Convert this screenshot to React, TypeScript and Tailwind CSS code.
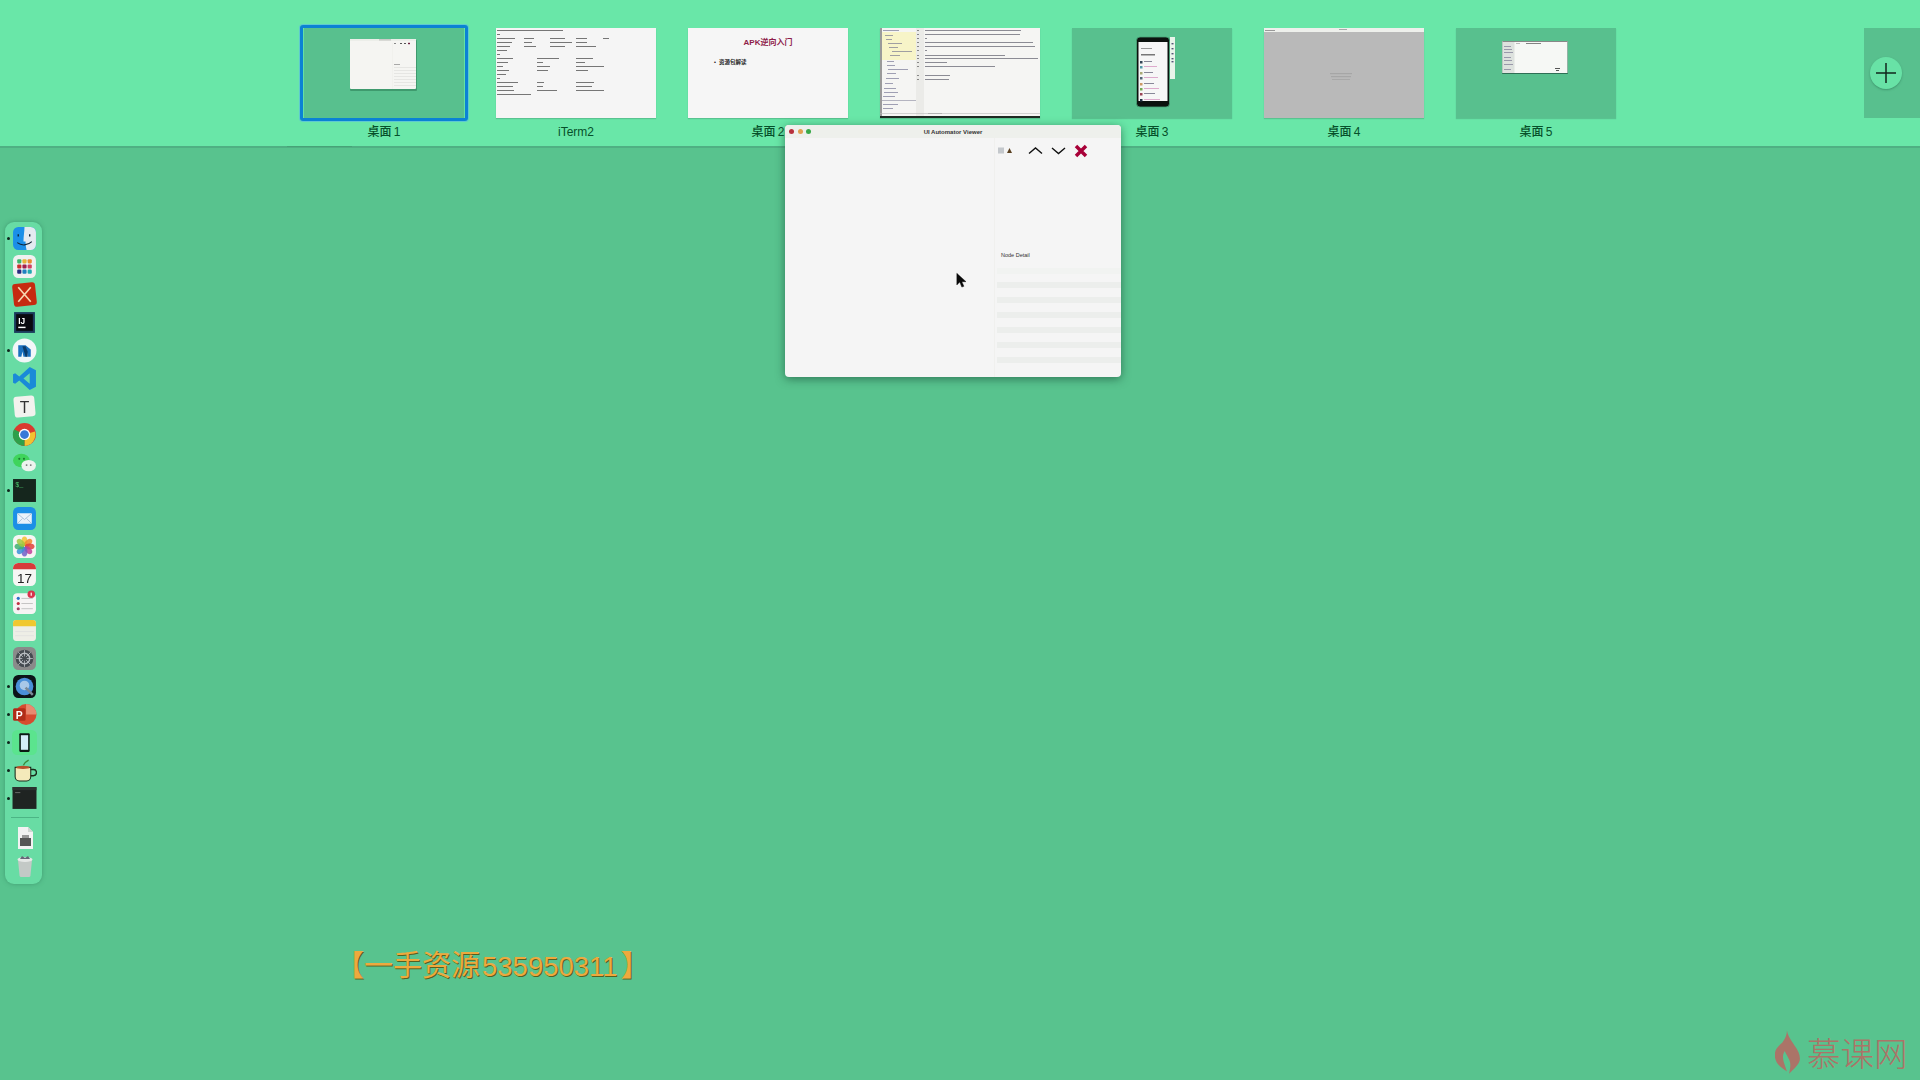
import React from "react";

const CJK = "font-['Liberation_Sans','Noto_Sans_CJK_SC',sans-serif]";

function Lines({ rows, color = "#333", h = 1 }: { rows: number[][]; color?: string; h?: number }) {
  return (
    <>
      {rows.map((r, i) => (
        <rect key={i} x={r[1]} y={r[0]} width={r[2]} height={h} fill={color} opacity={0.6} />
      ))}
    </>
  );
}

function MiniWindow() {
  return (
    <svg viewBox="0 0 160 90" className="block w-full h-full">
      <rect x="46" y="12" width="67" height="51" rx="1" fill="#3f9a6e" />
      <rect x="46" y="11" width="66" height="50" rx="1" fill="#f5f5f2" />
      <rect x="46" y="11" width="66" height="2" fill="#eceee9" />
      <rect x="75" y="11.500" width="12" height="0.8" fill="#aaa" />
      <rect x="88" y="15" width="0.6" height="46" fill="#eeeeea" />
      <rect x="90" y="15" width="2" height="1" fill="#888" />
      <rect x="96" y="15" width="2" height="1" fill="#555" />
      <rect x="100" y="15" width="2" height="1" fill="#555" />
      <rect x="104" y="14.800" width="2" height="1.400" fill="#702040" />
      <rect x="90" y="36" width="6" height="0.7" fill="#888" />
      {[39, 42, 45, 48, 51, 54, 57].map((y) => (
        <rect key={y} x="90" y={y} width="22" height="1" fill="#e6e6e3" />
      ))}
    </svg>
  );
}

function ITermThumb() {
  const rows = [
    [2, 1, 66], [6, 1, 3], [10, 1, 18], [10, 28, 10], [10, 54, 15], [10, 80, 11], [10, 107, 6],
    [14, 1, 15], [14, 28, 8], [14, 54, 22], [14, 80, 11], [18, 1, 13], [18, 28, 12], [18, 54, 15], [18, 80, 20],
    [22, 1, 10], [26, 1, 3], [30, 1, 16], [30, 41, 22], [30, 80, 17], [34, 1, 11], [34, 41, 6], [34, 80, 9],
    [38, 1, 6], [38, 41, 13], [38, 80, 28], [42, 1, 12], [42, 41, 11], [42, 80, 12], [46, 1, 9], [50, 1, 3],
    [54, 1, 21], [54, 41, 7], [54, 80, 18], [58, 1, 16], [58, 41, 6], [58, 80, 16], [62, 1, 17], [62, 41, 20], [62, 80, 28], [66, 1, 34],
  ];
  return (
    <svg viewBox="0 0 160 90" className="block w-full h-full bg-[#f5f5f5] blur-[0.3px]">
      <Lines rows={rows} color="#222" />
    </svg>
  );
}

function CodeThumb() {
  const code = [
    [2, 45, 96], [6, 45, 95], [10, 45, 2], [14, 45, 108], [18, 45, 110], [22, 45, 2], [27, 45, 80], [30, 45, 113],
    [34, 45, 22], [38, 45, 70], [47, 45, 25], [51, 45, 24],
  ];
  const tree = [
    [2, 3, 16], [7, 5, 8], [11, 6, 6], [15, 8, 14], [19, 9, 9], [23, 12, 20], [27, 10, 10], [33, 7, 7], [37, 7, 8],
    [41, 8, 20], [45, 7, 9], [50, 6, 13], [55, 5, 8], [60, 4, 12], [64, 4, 14], [68, 3, 12], [76, 3, 15], [80, 3, 10],
  ];
  return (
    <svg viewBox="0 0 160 90" className="block w-full h-full bg-[#f5f5f3] blur-[0.3px]">
      <rect x="0" y="4" width="36" height="28" fill="#f7f4c8" />
      <rect x="36" y="0" width="8" height="88" fill="#ebebe8" />
      <rect x="0" y="72" width="36" height="0.7" fill="#99a" />
      <Lines rows={tree} color="#668" />
      <rect x="0" y="0" width="2" height="88" fill="#9a9a9a" />
      {[2, 6, 10, 14, 18, 22, 27, 30, 34, 38, 47, 51].map((y) => (
        <rect key={y} x="37" y={y} width="2" height="1" fill="#888" />
      ))}
      <Lines rows={code} color="#445" />
      <rect x="48" y="85" width="14" height="1" fill="#aaa" />
      <rect x="0" y="85" width="160" height="0.6" fill="#bbb" />
      <rect x="0" y="88" width="160" height="2" fill="#1e2a22" />
    </svg>
  );
}

function PhoneThumb() {
  const items = [33, 38, 44, 49, 55, 60, 65, 71];
  return (
    <svg viewBox="0 0 160 90" className="block w-full h-full blur-[0.2px]">
      <rect x="98" y="9" width="5" height="42" fill="#e8f4ea" />
      {[15, 20, 25, 30, 33].map((y) => (
        <rect key={y} x="99.500" y={y} width="2" height="1.400" fill="#557" />
      ))}
      <rect x="64.500" y="9" width="33" height="70" rx="3.500" fill="#0b120e" stroke="#4aa57a" strokeWidth="0.8" />
      <rect x="66.500" y="14" width="29" height="59" fill="#f6f6f6" />
      <rect x="69" y="20" width="11" height="1" fill="#999" />
      <rect x="69" y="26" width="14" height="1.500" fill="#777" />
      {items.map((y, i) => (
        <g key={y}>
          <rect x="68" y={y} width="2.500" height="2.500" fill={["#345", "#59a", "#aa7", "#567", "#c96", "#7a5", "#945", "#234"][i]} />
          <rect x="72" y={y} width={8 + (i * 5) % 9} height="1" fill={i % 2 ? "#dac" : "#889"} />
        </g>
      ))}
    </svg>
  );
}

function GrayThumb() {
  return (
    <svg viewBox="0 0 160 90" className="block w-full h-full bg-[#b9b9b9]">
      <rect x="0" y="0" width="160" height="4" fill="#eef0ec" />
      <rect x="1" y="2" width="10" height="1" fill="#999" />
      <rect x="75" y="1" width="8" height="1" fill="#aaa" />
      <rect x="66" y="45" width="22" height="1.200" fill="#a6a6a6" />
      <rect x="67" y="48" width="20" height="1.200" fill="#a6a6a6" />
      <rect x="68" y="51" width="18" height="1" fill="#a8a8a8" />
    </svg>
  );
}

function SmallWindowThumb() {
  return (
    <svg viewBox="0 0 160 90" className="block w-full h-full blur-[0.2px]">
      <rect x="46" y="13" width="66" height="33" rx="0.8" fill="#2f6f55" />
      <rect x="46.500" y="13" width="65" height="32" fill="#f6f8f5" />
      <rect x="46.500" y="13" width="12" height="32" fill="#dde2de" />
      <rect x="46.500" y="13" width="65" height="1" fill="#888" />
      {[18, 21, 24, 29, 32, 36, 41].map((y, i) => (
        <rect key={y} x="48" y={y} width={7 + (i % 3)} height="1" fill="#99a" />
      ))}
      <rect x="70" y="15" width="15" height="0.8" fill="#666" />
      <rect x="60" y="15" width="4" height="0.8" fill="#aaa" />
      <rect x="99" y="40" width="5" height="1" fill="#555" />
      <rect x="100" y="42" width="3" height="1" fill="#555" />
    </svg>
  );
}

function Thumb({ label, selected, children, bg }: { label: string; selected?: boolean; children: React.ReactNode; bg?: string }) {
  return (
    <div className="flex flex-col items-center w-40 shrink-0">
      <div className="relative w-40 h-[90px] shadow-[0_1px_1px_rgba(60,130,100,0.35)]">
        {selected && (
          <div className="absolute left-[-4px] top-[-3px] w-[168px] h-[96px] rounded-[3px] border-[3px] border-[#0b82d4] shadow-[0_0_0_1px_#5fc9d0]" />
        )}
        <div className={`w-full h-full ${bg ?? ""}`}>{children}</div>
      </div>
      <div className={`mt-[7px] h-[14px] leading-[14px] text-[12px] text-[#06502a] font-medium [word-spacing:-1px] whitespace-pre ${CJK}`}>{label}</div>
    </div>
  );
}

const S = ({ children }: { children: React.ReactNode }) => (
  <svg viewBox="0 0 24 24" width="25" height="25" className="blur-[0.2px]">{children}</svg>
);

const icons: { run?: boolean; icon: React.ReactNode }[] = [
  { run: true, icon: <S><rect x="1" y="1" width="22" height="22" rx="5" fill="#1b8fe8" /><path d="M12 1h6a5 5 0 0 1 5 5v12a5 5 0 0 1-5 5h-4c-1-4-1-7-1-8h-2c0-5 1-10 1-14z" fill="#e4eaf0" /><path d="M6 8v2M17 8v2" stroke="#123" strokeWidth="1.300" /><path d="M5 16c4 3 10 3 14-1" stroke="#123" strokeWidth="1" fill="none" /></S> },
  { icon: <S><rect x="1" y="1" width="22" height="22" rx="5" fill="#f0f1f0" />{[["#3bb56c","#e8b23a","#e88a30"],["#c8302e","#a02050","#d04060"],["#2a2a80","#2080c0","#20a8b0"]].map((r,i)=>r.map((c,j)=><rect key={`${i}${j}`} x={5+j*5} y={5+i*5} width="4" height="4" rx="1" fill={c} />))}</S> },
  { icon: <S><rect x="1" y="1" width="22" height="22" rx="3" fill="#c62a10" transform="rotate(-6 12 12)" /><path d="M6 5l12 14M18 5L6 19" stroke="#f7d6b0" strokeWidth="1.600" /></S> },
  { icon: <S><rect x="2" y="2" width="20" height="20" fill="#1b3a5c" /><rect x="4" y="4" width="16" height="16" fill="#0a0a0f" /><text x="6" y="13" fontSize="8" fontWeight="700" fill="#fff" fontFamily="Liberation Sans">IJ</text><rect x="6" y="16" width="7" height="1.400" fill="#fff" /></S> },
  { run: true, icon: <S><circle cx="12" cy="12" r="11.500" fill="#f2f6f8" /><path d="M6 7h7l5 4v7h-3v-4l-1 4h-3l-1-5-1 5H6z" fill="#1a6fbe" /><path d="M10 8h3l2 5v5h-2z" fill="#0a3a6a" /></S> },
  { icon: <S><path d="M17 1l6 3v16l-6 3L7 14l-4 3-2-1V8l2-1 4 3zM17 7l-6 5 6 5z" fill="#1a8ad8" fillRule="evenodd" /></S> },
  { icon: <S><rect x="2" y="2" width="20" height="20" rx="3" fill="#f2f2ee" transform="rotate(-5 12 12)" /><text x="12" y="18" textAnchor="middle" fontSize="15" fill="#333" fontFamily="Liberation Sans">T</text></S> },
  { icon: <S><circle cx="12" cy="12" r="11" fill="#d93a2e" /><path d="M12 12L22 9a11 11 0 0 1-10 14z" fill="#f2c230" /><path d="M12 12l0 11A11 11 0 0 1 2 7z" fill="#2ea04a" /><circle cx="12" cy="12" r="5.400" fill="#fff" /><circle cx="12" cy="12" r="4.200" fill="#3878d8" /></S> },
  { icon: <S><ellipse cx="9" cy="10" rx="8" ry="6.500" fill="#3fd45c" /><circle cx="7" cy="8.500" r="1" fill="#1c7a30" /><circle cx="11.500" cy="8.500" r="1" fill="#1c7a30" /><ellipse cx="16" cy="15" rx="7" ry="5.500" fill="#eef3ee" /><circle cx="14" cy="14.500" r=".9" fill="#777" /><circle cx="18" cy="14.500" r=".9" fill="#777" /></S> },
  { run: true, icon: <S><rect x="1" y="1" width="22" height="22" fill="#15261d" /><text x="3" y="9" fontSize="6.500" fill="#49c46a" fontFamily="Liberation Mono">$</text><text x="7" y="9" fontSize="6.500" fill="#49c46a" fontFamily="Liberation Mono">_</text></S> },
  { icon: <S><rect x="1" y="1" width="22" height="22" rx="5" fill="#1c8fe6" /><rect x="5" y="7" width="14" height="10" rx="1" fill="#eaf2fa" /><path d="M5 7l7 6 7-6M5 17l5-5M19 17l-5-5" stroke="#9db8d4" strokeWidth=".8" fill="none" /></S> },
  { icon: <S><rect x="1" y="1" width="22" height="22" rx="5" fill="#f6f6f4" />{["#f2c230","#f08a2c","#e0403a","#c04098","#7060c8","#3a90d8","#40b070","#a0c840"].map((c,i)=><ellipse key={c} cx="12" cy="7" rx="2.800" ry="4.600" fill={c} opacity=".85" transform={`rotate(${i*45} 12 12)`} />)}</S> },
  { icon: <S><rect x="1" y="1" width="22" height="22" rx="5" fill="#f6f6f4" /><path d="M1 7V6a5 5 0 0 1 5-5h12a5 5 0 0 1 5 5v1z" fill="#d83a3a" /><text x="12" y="20" textAnchor="middle" fontSize="13" fill="#222" fontFamily="Liberation Sans">17</text></S> },
  { icon: <S><rect x="1" y="3" width="22" height="20" rx="4" fill="#f6f4f4" />{[9,14,19].map((y,i)=><g key={y}><circle cx="6" cy={y-1} r="1.500" fill={["#2a70c8","#c03040","#a04060"][i]} /><rect x="9" y={y-1.400} width="11" height=".8" fill="#bbb" /></g>)}<circle cx="18.500" cy="4" r="3.600" fill="#d8344c" /><rect x="17.800" y="2.500" width="1.400" height="3" fill="#f8d8d8" /></S> },
  { icon: <S><rect x="1" y="2" width="22" height="20" rx="3" fill="#eeeee6" /><path d="M1 8V5a3 3 0 0 1 3-3h16a3 3 0 0 1 3 3v3z" fill="#f0c830" /><path d="M3 13h18M3 17h18" stroke="#ddd" strokeWidth=".6" /></S> },
  { icon: <S><rect x="1" y="1" width="22" height="22" rx="5" fill="#8a8a8a" /><circle cx="12" cy="12" r="8.500" fill="#454a50" /><circle cx="12" cy="12" r="5" fill="none" stroke="#b8bcc0" strokeWidth="1.400" /><path d="M12 4v16M4 12h16M6 6l12 12M18 6L6 18" stroke="#b8bcc0" strokeWidth=".8" /><circle cx="12" cy="12" r="2.200" fill="#454a50" /></S> },
  { run: true, icon: <S><rect x="1" y="1" width="22" height="22" rx="5" fill="#0c1418" /><circle cx="12" cy="12" r="8.500" fill="#4a90d8" /><circle cx="12" cy="11" r="4.600" fill="#a8c8e8" /><path d="M13 13l7 7" stroke="#7a8a98" strokeWidth="2.400" /></S> },
  { run: true, icon: <S><circle cx="13.500" cy="12" r="10" fill="#d64a30" /><path d="M13.500 2a10 10 0 0 1 10 10h-10z" fill="#e88a70" /><rect x="1" y="6" width="12" height="12" rx="1.500" fill="#b02c18" /><text x="7" y="16" textAnchor="middle" fontSize="10" fontWeight="700" fill="#fff" fontFamily="Liberation Sans">P</text></S> },
  { run: true, icon: <S><rect x="0" y="0" width="24" height="24" rx="5" fill="#5be48e" /><rect x="7" y="3" width="10" height="18" rx="1" fill="#0c1a14" /><rect x="8.500" y="5" width="7" height="14" fill="#d4eef8" /></S> },
  { run: true, icon: <S><path d="M3 9h15v9a4 4 0 0 1-4 4H7a4 4 0 0 1-4-4z" fill="#f4eaba" stroke="#1a2a1a" strokeWidth="1" /><path d="M18 11h2.500a2 2 0 0 1 0 6H18" fill="none" stroke="#1a2a1a" strokeWidth="1.300" /><ellipse cx="10.500" cy="9" rx="6.500" ry="1.600" fill="#b8502a" /><path d="M11 7c1-3 3-4 5-5" stroke="#3a8a3a" strokeWidth="1.200" fill="none" /></S> },
  { run: true, icon: <S><rect x="0.500" y="1" width="23" height="21" fill="#1f2422" /><rect x="0.500" y="1" width="23" height="3" fill="#2c3330" /><rect x="3" y="6" width="5" height=".8" fill="#777" /></S> },
];

function Dock() {
  return (
    <div className="ml-[5px] mt-[74px] w-[37px] h-[662px] rounded-[9px] bg-[#68dca4] shadow-[0_0_4px_rgba(50,130,95,0.6)] flex flex-col items-center pt-[2px] relative">
      {icons.map((it, i) => (
        <div key={i} className="h-[28px] w-full flex items-center justify-center relative">
          {it.run && <span className="absolute left-[2px] top-[13px] w-[3px] h-[3px] rounded-full bg-[#10241c]" />}
          <div className="ml-[2px] w-[25px] h-[25px]">{it.icon}</div>
        </div>
      ))}
      <div className="mt-[5px] mb-[6px] ml-[2px] w-[28px] h-px bg-[#4cb585]" />
      <div className="h-[28px] w-full flex items-center justify-center">
        <svg viewBox="0 0 24 24" width="24" height="24" className="ml-[2px]">
          <path d="M5 1h10l5 5v17H5z" fill="#f2f2f2" /><path d="M15 1v5h5z" fill="#cfd6d2" /><rect x="7" y="12" width="11" height="8" fill="#555" /><rect x="9" y="9" width="7" height="3" fill="#999" />
        </svg>
      </div>
      <div className="h-[28px] w-full flex items-center justify-center">
        <svg viewBox="0 0 24 24" width="24" height="24" className="ml-[2px]">
          <path d="M5 6h14l-1.600 16a1.500 1.500 0 0 1-1.500 1H8.100a1.500 1.500 0 0 1-1.500-1z" fill="#c3c9c6" /><ellipse cx="12" cy="5.500" rx="7.500" ry="2.500" fill="#e4e8e6" /><path d="M7 5l2-3 3 2 3-2 2 3" fill="#667" />
        </svg>
      </div>
    </div>
  );
}

function UiViewerWindow() {
  return (
    <div className="absolute left-[785px] top-[125px] w-[336px] h-[252px] rounded-[4px] bg-[#f5f5f5] shadow-[0_2px_10px_rgba(20,70,50,0.6)] flex flex-col overflow-hidden">
      <div className="h-[13px] bg-[#eef0ec] relative flex items-center justify-center shrink-0">
        <div className="absolute left-[4px] top-[4px] flex gap-[3.500px]">
          <span className="w-[5px] h-[5px] rounded-full bg-[#b8303c]" />
          <span className="w-[5px] h-[5px] rounded-full bg-[#e0a050]" />
          <span className="w-[5px] h-[5px] rounded-full bg-[#38a848]" />
        </div>
        <span className="text-[6px] leading-none font-bold text-[#333] font-['Liberation_Sans',sans-serif]">UI Automator Viewer</span>
      </div>
      <div className="flex-1 flex relative">
        <div className="w-[210px] border-r border-[#f0f0ee]" />
        <div className="flex-1 flex flex-col pl-[2px]">
          <div className="h-[111px] pt-[5px] flex items-start">
            <svg viewBox="0 0 100 16" width="100" height="16">
              <rect x="1" y="4.500" width="6" height="6" fill="#c4c8cc" />
              <path d="M10 10l2.500-5 2.500 5z" fill="#5a4020" />
              <path d="M32 10.500l6.500-5.500 6.500 5.500" fill="none" stroke="#111" strokeWidth="1.400" />
              <path d="M55 5l6.500 5.500 6.500-5.500" fill="none" stroke="#111" strokeWidth="1.400" />
              <path d="M79 3l10 10M89 3L79 13" fill="none" stroke="#a80038" strokeWidth="3.500" />
            </svg>
          </div>
          <div className="h-[13px] flex items-center pl-[4px] text-[5.500px] text-[#333] font-['Liberation_Sans',sans-serif]">Node Detail</div>
          <div className="flex flex-col mt-[6px]">
            <div className="h-[6px] mb-[8px] bg-[#f1f3f1]" />
            {[0, 1, 2, 3, 4, 5].map((i) => (
              <div key={i} className="h-[6px] mb-[9px] bg-[#eceeec]" />
            ))}
          </div>
        </div>
        <svg viewBox="0 0 12 18" width="10" height="16" className="absolute left-[171px] top-[134px]">
          <path d="M1 1v14l3.500-3.500 2.500 6 2.500-1-2.500-5.500h5z" fill="#0a0a0a" stroke="#0a0a0a" strokeWidth=".5" />
        </svg>
      </div>
    </div>
  );
}

export default function App() {
  return (
    <div className="relative w-[1920px] h-[1080px] overflow-hidden bg-[#58c38e] flex flex-col">
      <header className="relative h-[148px] shrink-0 bg-[#69e7a8] border-b-[2px] border-[#4fb083] flex items-start pl-[304px] pt-[28px]">
        <div className="flex gap-8">
          <Thumb label="桌面 1" selected bg="bg-[#58c08e]"><MiniWindow /></Thumb>
          <Thumb label="iTerm2"><ITermThumb /></Thumb>
          <Thumb label="桌面 2">
            <div className="w-full h-full bg-[#f6f6f6] flex flex-col">
              <div className={`mt-[9px] text-center text-[8px] leading-[12px] font-bold text-[#8e1c4a] ${CJK}`}>APK逆向入门</div>
              <div className={`mt-[9px] ml-[26px] text-[5.500px] leading-[8px] font-bold text-[#222] ${CJK}`}>•&nbsp;&nbsp;资源包解读</div>
            </div>
          </Thumb>
          <Thumb label=" "><CodeThumb /></Thumb>
          <Thumb label="桌面 3" bg="bg-[#58c08e]"><PhoneThumb /></Thumb>
          <Thumb label="桌面 4"><GrayThumb /></Thumb>
          <Thumb label="桌面 5" bg="bg-[#58c08e]"><SmallWindowThumb /></Thumb>
        </div>
        <div className="absolute left-[1864px] top-[28px] w-14 h-[90px] bg-[#58c08e] flex items-center pl-[6px]">
          <div className="w-8 h-8 rounded-full bg-[#68e2a6] shadow-[0_1px_2px_rgba(40,110,80,0.5)] flex items-center justify-center">
            <svg viewBox="0 0 20 20" width="20" height="20"><path d="M10 0v20M0 10h20" stroke="#10261c" strokeWidth="1.500" /></svg>
          </div>
        </div>
        <div className="absolute left-[287px] bottom-[-1px] w-[65px] h-px bg-[#47a277]" />
      </header>
      <main className="flex-1 flex">
        <Dock />
      </main>
      <div className={`absolute left-[335px] top-[946px] text-[29px] leading-[40px] text-[#eda93e] [text-shadow:1px_1px_0_#55601f] whitespace-nowrap ${CJK}`}>
        <span className="font-bold">【</span>一手资源<span className="ml-[2px] text-[27.500px]">535950311</span><span className="ml-[3px] font-bold">】</span>
      </div>
      <div className="absolute left-[1775px] top-[1030px] flex items-center gap-[6px]">
        <svg viewBox="0 0 24 40" width="26" height="44">
          <path d="M11 0c1 6 4 9 7 14 3 4 5 8 5 12 0 5-5 9-10 14 1-5 2-9 0-13-1-3-3-5-4-8-2 3-2 6-1 10 1 3 2 6 3 9-5-3-10-7-11-13C-1 17 3 15 7 11c2-3 4-6 4-11z" fill="#ab7468" />
        </svg>
        <span className="text-[33.500px] leading-[40px] font-light text-[#ab7468] font-['Noto_Sans_CJK_SC',sans-serif]">慕课网</span>
      </div>
      <UiViewerWindow />
    </div>
  );
}
